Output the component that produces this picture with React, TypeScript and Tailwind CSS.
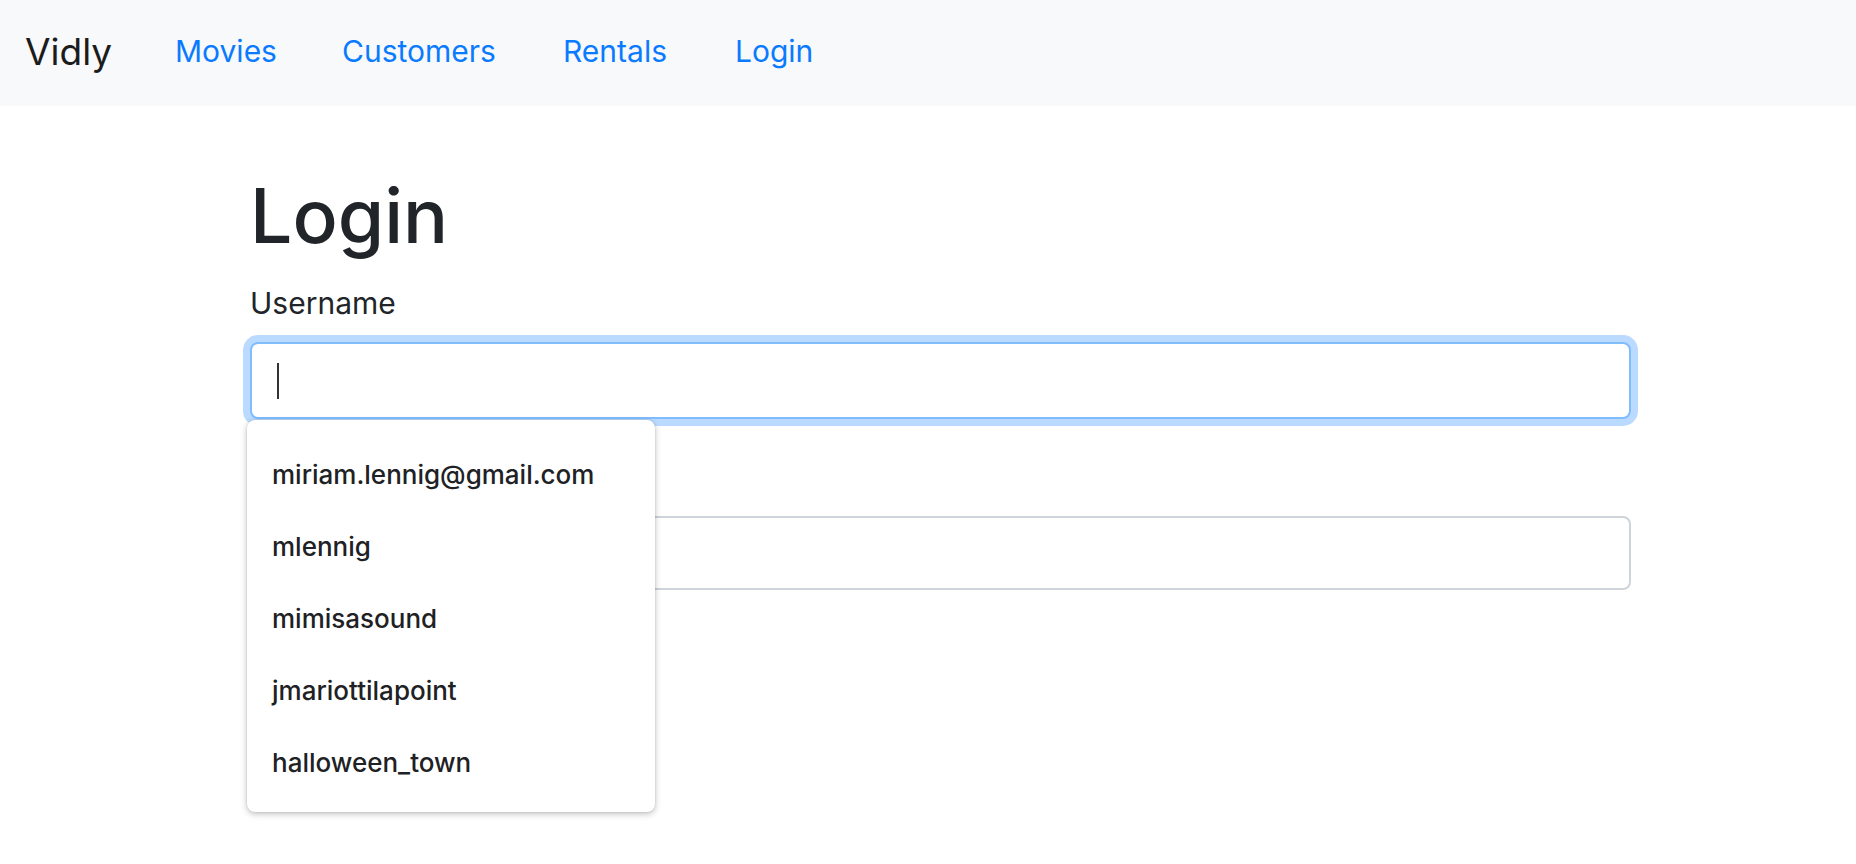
import React from "react";

const items = [
  "miriam.lennig@gmail.com",
  "mlennig",
  "mimisasound",
  "jmariottilapoint",
  "halloween_town",
];

export default function App() {
  return (
    <div className="min-h-[864px] bg-white font-['Inter',sans-serif] text-[#212529]">
      <nav className="flex h-[106px] items-center bg-[#f8f9fa] pb-[4px] pl-[25px]">
        <a className="w-[150px] text-[37px] leading-none text-[#1c1c1c]">Vidly</a>
        <a className="w-[167px] text-[30px] leading-none text-[#0a7bff]">Movies</a>
        <a className="w-[221px] text-[30px] leading-none text-[#0a7bff]">Customers</a>
        <a className="w-[172px] text-[30px] leading-none text-[#0a7bff]">Rentals</a>
        <a className="text-[30px] leading-none text-[#0a7bff]">Login</a>
      </nav>

      <main className="ml-[250px] w-[1381px] pt-[64px]">
        <h1 className="text-[75px] font-medium leading-[92px]">Login</h1>
        <div className="mt-[19px]">
          <label className="block text-[30px] leading-[44px]">Username</label>
          <div className="relative mt-[17px]">
            <div className="flex h-[77px] items-center rounded-[8px] border-[2.5px] border-[#80bdff] bg-white pl-[25px] shadow-[0_0_0_7px_rgba(0,123,255,0.27)]">
              <span className="block h-[36px] w-[2px] bg-[#333]" />
            </div>

            <div className="mt-[30px]">
              <label className="block text-[30px] leading-[44px]">Password</label>
              <div className="mt-[23px] h-[74px] rounded-[8px] border-2 border-[#ced4da] bg-white" />
            </div>

            <div className="absolute left-[-3px] top-[78px] z-10 w-[408px] rounded-[8px] bg-white pb-[14px] pl-[25px] pt-[18px] shadow-[0_2px_6px_rgba(0,0,0,0.25),0_0_2px_rgba(0,0,0,0.12)]">
              {items.map((t) => (
                <div
                  key={t}
                  className="flex h-[72px] items-center text-[26px] font-medium text-[#202124]"
                >
                  {t}
                </div>
              ))}
            </div>
          </div>
        </div>
      </main>
    </div>
  );
}
